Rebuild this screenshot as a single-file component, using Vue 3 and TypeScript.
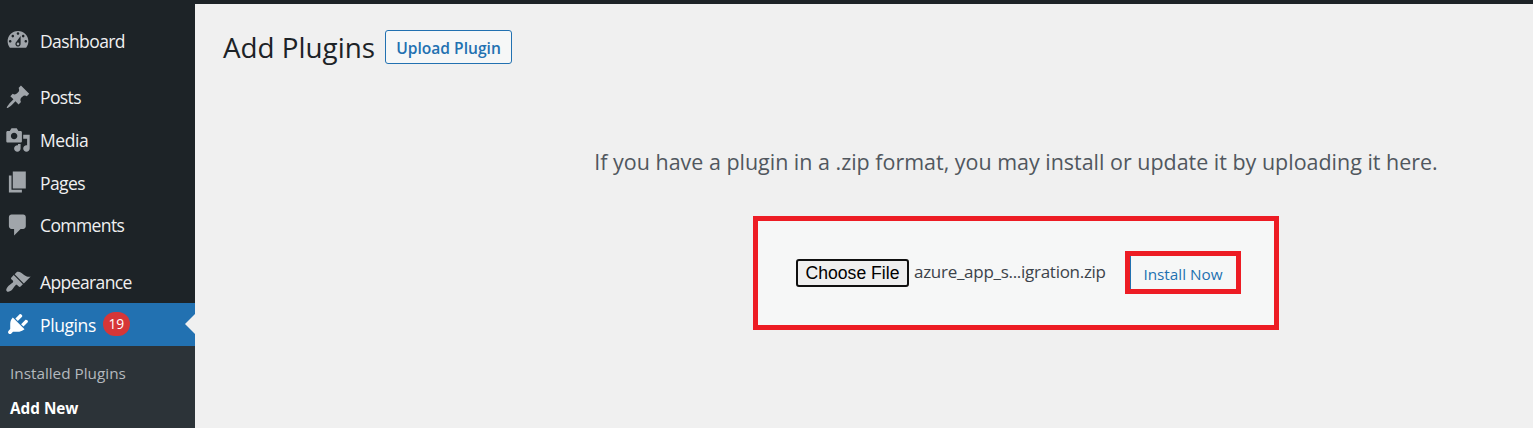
<script setup lang="ts">
interface MenuItem {
  label: string
  key: string
  icon: string
  badge?: number
}

const groups: MenuItem[][] = [
  [
    {
      label: 'Dashboard',
      key: 'dashboard',
      icon: 'M3.76 16h12.48c1.1-1.37 1.76-3.11 1.76-5 0-4.42-3.58-8-8-8s-8 3.58-8 8c0 1.89.66 3.63 1.76 5zM10 4c.55 0 1 .45 1 1s-.45 1-1 1-1-.45-1-1 .45-1 1-1zM6 6c.55 0 1 .45 1 1s-.45 1-1 1-1-.45-1-1 .45-1 1-1zm8 0c.55 0 1 .45 1 1s-.45 1-1 1-1-.45-1-1 .45-1 1-1zm-5.37 5.55L12 7v6c0 1.1-.9 2-2 2s-2-.9-2-2c0-.57.24-1.08.63-1.45zM4 10c.55 0 1 .45 1 1s-.45 1-1 1-1-.45-1-1 .45-1 1-1zm12 0c.55 0 1 .45 1 1s-.45 1-1 1-1-.45-1-1 .45-1 1-1zm-5 3c0-.55-.45-1-1-1s-1 .45-1 1 .45 1 1 1 1-.45 1-1z',
    },
  ],
  [
    {
      label: 'Posts',
      key: 'posts',
      icon: 'M10.44 3.02l1.82-1.82 6.36 6.35-1.83 1.82c-1.05-.68-2.48-.57-3.41.36l-.75.75c-.92.93-1.04 2.35-.35 3.41l-1.83 1.82-2.41-2.41-2.8 2.79c-.42.42-3.38 2.71-3.8 2.29s1.86-3.39 2.28-3.81l2.79-2.79L4.1 9.36l1.83-1.82c1.05.69 2.48.57 3.4-.36l.75-.75c.93-.92 1.05-2.35.36-3.41z',
    },
    {
      label: 'Media',
      key: 'media',
      icon: 'M13 11V4c0-.55-.45-1-1-1h-1.67L9 1H5L3.67 3H2c-.55 0-1 .45-1 1v7c0 .55.45 1 1 1h10c.55 0 1-.45 1-1zM7 4.5c1.38 0 2.5 1.12 2.5 2.5S8.38 9.5 7 9.5 4.5 8.38 4.5 7 5.62 4.5 7 4.5zM14 6h5v10.5c0 1.38-1.12 2.5-2.5 2.5S14 17.88 14 16.5s1.12-2.5 2.5-2.5c.17 0 .34.02.5.05V9h-3V6zm-4 8.05V13h2v3.5c0 1.38-1.12 2.5-2.5 2.5S7 17.88 7 16.5 8.12 14 9.5 14c.17 0 .34.02.5.05z',
    },
    {
      label: 'Pages',
      key: 'pages',
      icon: 'M6 15V2h10v13H6zm-1 1h8v2H3V5h2v11z',
    },
    {
      label: 'Comments',
      key: 'comments',
      icon: 'M5 2h9c1.1 0 2 .9 2 2v7c0 1.1-.9 2-2 2h-2l-5 5v-5H5c-1.1 0-2-.9-2-2V4c0-1.1.9-2 2-2z',
    },
  ],
  [
    {
      label: 'Appearance',
      key: 'appearance',
      icon: 'M14.48 11.06L7.41 3.99l1.5-1.5c.5-.56 2.3-.47 3.51.32 1.21.8 1.43 1.28 2.91 2.1 1.18.64 2.45 1.26 4.45.85zm-.71.71L6.7 4.7 4.93 6.47c-.39.39-.39 1.02 0 1.41l1.06 1.06c.39.39.39 1.03 0 1.42-.6.6-1.43 1.11-2.21 1.69-.35.26-.7.53-1.01.84C1.43 14.23.4 16.08 1.4 17.07c.99 1 2.84-.03 4.18-1.36.31-.31.58-.66.85-1.02.57-.78 1.08-1.61 1.69-2.21.39-.39 1.02-.39 1.41 0l1.06 1.06c.39.39 1.02.39 1.41 0z',
    },
    {
      label: 'Plugins',
      key: 'plugins',
      badge: 19,
      icon: 'M13.11 4.36L9.87 7.6 8 5.73l3.24-3.24c.35-.34 1.05-.2 1.56.32.52.51.66 1.21.31 1.55zm-8 1.77l.91-1.12 9.01 9.01-1.19.84c-.71.71-2.63 1.16-3.82 1.16H6.14L4.9 17.26c-.59.59-1.54.59-2.12 0-.59-.58-.59-1.53 0-2.12l1.24-1.24v-3.88c0-1.13.4-3.19 1.09-3.89zm7.26 3.97l3.24-3.24c.34-.35 1.04-.21 1.55.31.52.51.66 1.21.31 1.55l-3.24 3.25z',
    },
  ],
]

const active = 'plugins'
</script>

<template>
  <div class="admin">
    <div class="adminbar"></div>
    <div class="body">
      <nav class="menu">
        <div v-for="(group, i) in groups" :key="i" class="group">
          <a v-for="item in group" :key="item.key" class="item" :class="[item.key, { current: item.key === active }]">
            <svg class="icon" viewBox="0 0 20 20" aria-hidden="true"><path fill-rule="evenodd" :d="item.icon" /></svg>
            <span class="label">{{ item.label }}</span>
            <span v-if="item.badge" class="badge">{{ item.badge }}</span>
          </a>
        </div>
        <div class="submenu">
          <a class="sub installed">Installed Plugins</a>
          <a class="sub selected">Add New</a>
        </div>
      </nav>
      <main class="content">
        <header class="heading">
          <h1>Add Plugins</h1>
          <a class="upload"><span>Upload Plugin</span></a>
        </header>
        <p class="help">If you have a plugin in a .zip format, you may install or update it by uploading it here.</p>
        <form class="form" @submit.prevent>
          <button type="button" class="choose">Choose File</button>
          <span class="filename">azure_app_s...igration.zip</span>
          <button type="submit" class="install"><span>Install Now</span></button>
        </form>
      </main>
    </div>
  </div>
</template>

<style>
body {
  margin: 0;
  overflow: hidden;
}
</style>

<style scoped>
.admin {
  height: 428px;
  display: flex;
  flex-direction: column;
  overflow: hidden;
  background: #f0f0f0;
  color: #3c434a;
  font-family: "Open Sans", "Noto Sans", sans-serif;
}
.adminbar {
  flex: none;
  height: 4px;
  background: #1d2327;
}
.body {
  flex: 1;
  min-height: 0;
  display: flex;
}
.menu {
  flex: none;
  width: 195px;
  box-sizing: border-box;
  padding-top: 15px;
  display: flex;
  flex-direction: column;
  gap: 14px;
  background: #1d2327;
}
.item {
  position: relative;
  display: flex;
  align-items: center;
  height: 42.67px;
  color: #f0f0f1;
  font-size: 17.5px;
  line-height: 24px;
}
.icon {
  flex: none;
  width: 26px;
  height: 26px;
  margin: 0 9px 0 5px;
  fill: #a0a5aa;
}
.current {
  background: #2271b1;
  color: #fff;
}
.current .icon {
  fill: #fff;
}
.current::after {
  content: "";
  position: absolute;
  right: 0;
  top: 11px;
  border: 10px solid transparent;
  border-left: 0;
  border-right-color: #f0f0f0;
}
.label {
  padding-top: 1px;
  letter-spacing: -0.6px;
}
.media .label,
.plugins .label {
  letter-spacing: -0.4px;
}
.badge {
  width: 27px;
  height: 24px;
  margin-left: 7px;
  border-radius: 12px;
  background: #d63638;
  font-size: 13.8px;
  line-height: 24px;
  text-align: center;
}
.submenu {
  flex: 1;
  margin-top: -14px;
  padding: 10px 0 0 10px;
  display: flex;
  flex-direction: column;
  background: #2c3338;
}
.sub {
  height: 35px;
  color: #b4b9be;
  font-size: 15.3px;
  line-height: 35px;
}
.selected {
  color: #fff;
  font-weight: 700;
}
.content {
  flex: 1;
  display: flex;
  flex-direction: column;
}
.heading {
  display: flex;
  align-items: center;
  gap: 11px;
  height: 34px;
  margin: 26px 0 0 28px;
}
h1 {
  width: 151px;
  margin: 0;
  color: #1d2327;
  font-size: 27.8px;
  font-weight: 400;
  line-height: 36px;
  white-space: nowrap;
}
.upload {
  width: 127px;
  height: 34px;
  box-sizing: border-box;
  border: 1px solid #2271b1;
  border-radius: 3px;
  background: #f6f7f7;
  color: #2271b1;
  font-size: 15.6px;
  font-weight: 600;
  line-height: 34px;
  text-align: center;
  white-space: nowrap;
}
.help {
  align-self: center;
  margin: 83px 0 0 304px;
  color: #50575e;
  font-size: 21.46px;
  line-height: 30px;
  white-space: nowrap;
}
.form {
  display: flex;
  align-items: center;
  width: 526px;
  height: 114px;
  box-sizing: border-box;
  margin: 39px 0 0 558px;
  padding-left: 38px;
  border: 5px solid #ed1c24;
  background: #f6f7f7;
}
.choose {
  width: 113px;
  height: 28px;
  padding: 0;
  border: 2px solid #101010;
  border-radius: 3px;
  background: #efefef;
  color: #000;
  font: 17.6px/24px "Liberation Sans", Arial, sans-serif;
  white-space: nowrap;
}
.filename {
  width: 193px;
  margin: 0 18px 3px 5px;
  color: #3c434a;
  font-size: 17px;
  letter-spacing: -0.28px;
  white-space: nowrap;
}
.install {
  width: 116px;
  height: 43px;
  margin-bottom: 2px;
  padding: 3px 0 0;
  border: 5px solid #ed1c24;
  background: #f6f7f7;
  box-shadow: inset 1px 0 #2271b1;
  color: #2271b1;
  font: 15.3px/20px "Open Sans", "Noto Sans", sans-serif;
  white-space: nowrap;
}
</style>
